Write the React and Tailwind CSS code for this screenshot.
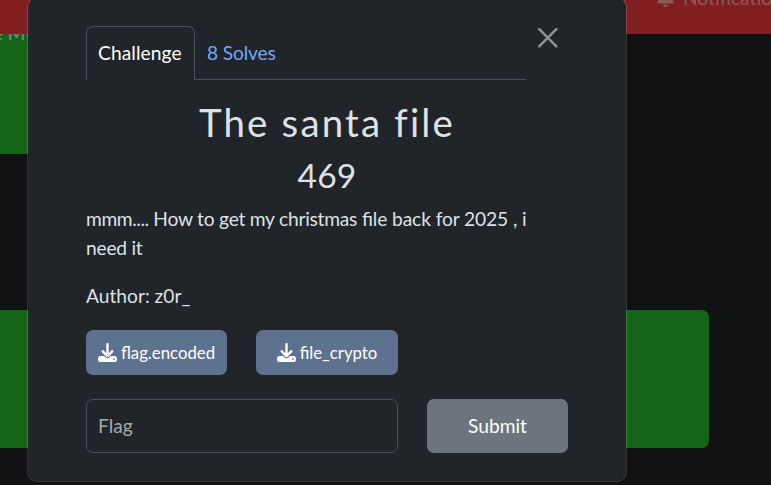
import React from "react";
import { FaBell, FaDownload } from "react-icons/fa6";

function Backdrop() {
  return (
    <div className="flex h-[485px] flex-col bg-[#111214]">
      <header className="z-10 flex h-[34px] shrink-0 items-start justify-end bg-[#7f1f20] text-[#8e595b]">
        <div className="-mt-[16px] flex h-[29px] w-[114px] shrink-0 items-center gap-[9px] whitespace-nowrap">
          <FaBell className="h-[19px] w-[17px] shrink-0 -translate-y-px" />
          <span>Notifications</span>
        </div>
      </header>
      <div className="h-[120px] w-[500px] shrink-0 bg-[#156518] text-[#7f8a80]">
        <div className="-mt-[15px] -ml-[7px] whitespace-nowrap tracking-[-0.3px]">e My</div>
      </div>
      <div className="mt-[156px] h-[138px] w-[709px] shrink-0 rounded-r-[7px] bg-[#156518]" />
    </div>
  );
}

function FileButton({ name, width }) {
  return (
    <a className={`flex h-[45px] items-center justify-center gap-[4px] rounded-[7px] bg-[#5e728f] text-[16.8px] text-white ${width}`}>
      <FaDownload className="size-[19px] shrink-0" />
      <span className="pt-px">{name}</span>
    </a>
  );
}

function ChallengeDialog() {
  return (
    <section className="absolute -top-[3px] left-[27px] z-20 flex h-[485px] w-[600px] flex-col rounded-[10px] border border-white/15 bg-[#212529] bg-clip-padding pl-[58px] pt-[28px] text-[#dee2e6]">
      <div className="flex h-[54px] items-start">
        <nav className="flex h-[54px] w-[440px] shrink-0">
          <div className="flex w-[109px] items-center rounded-t-[7px] border border-b-0 border-[#495057] pl-[11px] tracking-[0.08px] text-white">
            Challenge
          </div>
          <div className="flex flex-1 items-center border-b border-[#495057] pl-[12px] pt-px tracking-[-0.15px] text-[#6ea8fe]">
            8 Solves
          </div>
        </nav>
        <button aria-label="Close" className="ml-[12px] mt-[2.4px]">
          <svg viewBox="0 0 16 16" className="size-[19.6px] fill-[#909294]">
            <path d="M.293.293a1 1 0 0 1 1.414 0L8 6.586 14.293.293a1 1 0 1 1 1.414 1.414L9.414 8l6.293 6.293a1 1 0 0 1-1.414 1.414L8 9.414l-6.293 6.293a1 1 0 0 1-1.414-1.414L6.586 8 .293 1.707a1 1 0 0 1 0-1.414z" />
          </svg>
        </button>
      </div>
      <div className="w-[482px] text-center">
        <h2 className="mt-[19px] text-[38.4px] leading-[46px] tracking-[2.2px]">The santa file</h2>
        <h3 className="mt-[10px] text-[33.6px] leading-[40px] tracking-[0.2px]">469</h3>
      </div>
      <div className="mt-[10px] w-[482px]">
        <p className="tracking-[-0.23px] [font-feature-settings:'liga'_1]">
          <span className="tracking-[-0.4px]">mmm....</span> How to get my christmas <span className="tracking-[-0.1px]">file back for 2025 , i</span>
          <br />
          need it
        </p>
        <p className="mt-[19px]">Author: z0r_</p>
      </div>
      <div className="mt-[20px] flex gap-[29px]">
        <FileButton name="flag.encoded" width="w-[141px]" />
        <FileButton name="file_crypto" width="w-[142px]" />
      </div>
      <form className="mt-[24px] flex gap-[29px]" onSubmit={(e) => e.preventDefault()}>
        <input
          placeholder="Flag"
          className="h-[54px] w-[312px] rounded-[7px] border border-[#495057] bg-transparent pb-[2px] pl-[11px] pr-[12px] placeholder:text-[#a6a9ad]"
        />
        <button className="h-[54px] w-[141px] rounded-[7px] bg-[#6c757d] text-white">Submit</button>
      </form>
    </section>
  );
}

export default function App() {
  return (
    <main className="relative h-[485px] w-[771px] overflow-hidden font-['Lato',sans-serif] text-[19.2px] leading-[28.8px]">
      <Backdrop />
      <ChallengeDialog />
    </main>
  );
}
